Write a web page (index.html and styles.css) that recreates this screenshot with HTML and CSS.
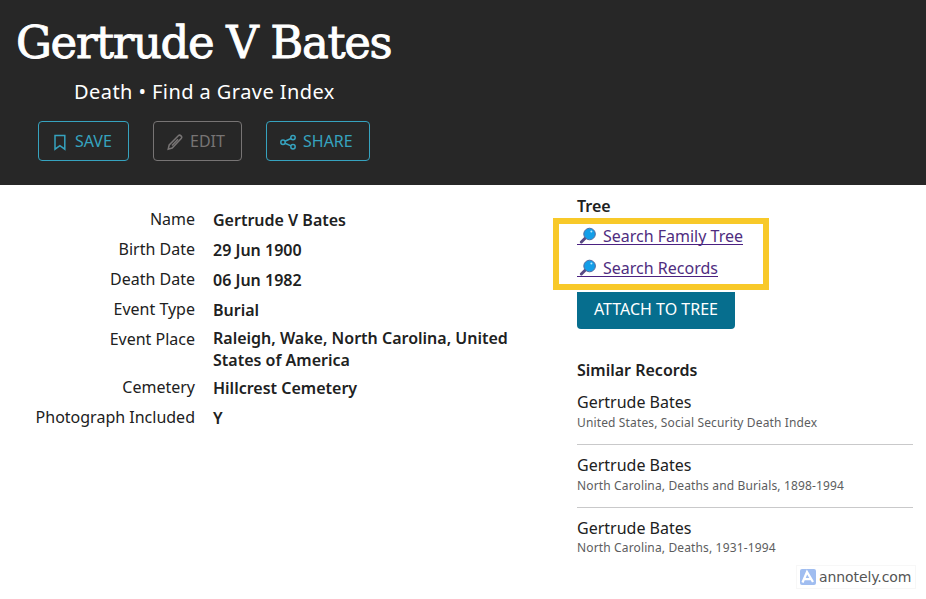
FILE: index.html
```html
<!DOCTYPE html>
<html lang="en">
<head>
<meta charset="utf-8">
<title>Gertrude V Bates</title>
<link rel="stylesheet" href="styles.css">
</head>
<body>
<header class="hero">
  <h1 class="title">Gertrude V Bates</h1>
  <p class="subtitle">Death • Find a Grave Index</p>
  <div class="actions">
    <button class="btn save"><svg width="16" height="18" viewBox="0 0 16 18"><path d="M3 2.5h9.8V16.2L7.9 12.6 3 16.2Z"/></svg><span>SAVE</span></button>
    <button class="btn edit"><svg width="16" height="18" viewBox="0 0 16 18"><path d="M1.2 16.2 2.2 12 11.3 2.7Q12.6 1.5 14 2.9 15.4 4.3 14.2 5.6L5.2 15ZM5 12.4l6-6.2"/></svg><span>EDIT</span></button>
    <button class="btn share"><svg width="16" height="18" viewBox="0 0 16 18"><circle cx="3" cy="9.2" r="2.2"/><circle cx="13" cy="4.6" r="2.2"/><circle cx="13" cy="13.8" r="2.2"/><path d="m5 8.2 6-2.7M5 10.2l6 2.7"/></svg><span>SHARE</span></button>
  </div>
</header>
<main class="content">
  <dl class="facts">
    <dt>Name</dt><dd>Gertrude V Bates</dd>
    <dt>Birth Date</dt><dd>29 Jun 1900</dd>
    <dt>Death Date</dt><dd>06 Jun 1982</dd>
    <dt>Event Type</dt><dd>Burial</dd>
    <dt>Event Place</dt><dd class="place">Raleigh, Wake, North Carolina, United<br>States of America</dd>
    <dt>Cemetery</dt><dd>Hillcrest Cemetery</dd>
    <dt>Photograph Included</dt><dd>Y</dd>
  </dl>
  <aside class="side">
    <h2 class="heading">Tree</h2>
    <div class="highlight">
      <a class="link family"><svg width="20" height="18" viewBox="0 0 20 18"><path class="handle" d="m4.4 16 4-4"/><circle class="lens" cx="12.6" cy="8" r="5.8"/><circle class="glint" cx="14.4" cy="5.4" r="1"/></svg><span>Search Family Tree</span></a>
      <a class="link records"><svg width="20" height="18" viewBox="0 0 20 18"><path class="handle" d="m4.4 16 4-4"/><circle class="lens" cx="12.6" cy="8" r="5.8"/><circle class="glint" cx="14.4" cy="5.4" r="1"/></svg><span>Search Records</span></a>
    </div>
    <button class="attach"><span>ATTACH TO TREE</span></button>
    <h2 class="heading similar">Similar Records</h2>
    <ul class="list">
      <li><b>Gertrude Bates</b><small>United States, Social Security Death Index</small></li>
      <li><b>Gertrude Bates</b><small>North Carolina, Deaths and Burials, 1898-1994</small></li>
      <li><b>Gertrude Bates</b><small>North Carolina, Deaths, 1931-1994</small></li>
    </ul>
  </aside>
</main>
<div class="watermark"><svg width="16" height="16" viewBox="0 0 16 16"><rect width="16" height="16" rx="2" fill="#a0bdf0"/><path d="M2.5 13.5 7 3l6 10M4.5 9.8l6 .3" fill="none" stroke="#fff" stroke-width="2.3"/></svg><span>annotely.com</span></div>
</body>
</html>
```
FILE: styles.css
```css
* { box-sizing: border-box; }
body {
  margin: 0;
  width: 926px;
  height: 599px;
  overflow: hidden;
  position: relative;
  background: #fff;
  color: #202121;
  font: 16px/22px "Noto Sans", sans-serif;
  white-space: nowrap;
}
h1, h2, p, dl, dd, ul { margin: 0; padding: 0; }
.hero { height: 185px; background: #272727; color: #fff; }
.title {
  padding: 13px 0 0 16px;
  font: 400 45px/60px "DejaVu Serif", serif;
  letter-spacing: -1.35px;
  -webkit-text-stroke: 0.9px #fff;
}
.subtitle { padding: 5px 0 0 74px; font-size: 20px; line-height: 28px; letter-spacing: 0.43px; }
.actions { display: flex; gap: 24px; padding: 15px 0 0 38px; }
.btn {
  display: flex;
  align-items: center;
  gap: 7px;
  height: 40px;
  padding: 0 0 0 13px;
  border: 1px solid #36a3bf;
  border-radius: 4px;
  background: none;
  color: #36a3bf;
  font: 16px/22px "Noto Sans", sans-serif;
}
.btn svg { flex: none; margin-top: 2px; fill: none; stroke: currentColor; stroke-width: 1.5; }
.save { width: 91px; }
.edit { width: 89px; color: #777474; border-color: #777474; }
.share { width: 104px; }
.content { display: grid; grid-template-columns: 577px 336px; }
.facts {
  display: grid;
  grid-template-columns: 195px 364px;
  column-gap: 18px;
  align-content: start;
  grid-auto-rows: minmax(30px, auto);
  padding-top: 20px;
}
.facts dt { padding-top: 3px; text-align: right; }
.facts dd { padding-top: 4px; font-weight: 600; }
.facts .place { padding: 2px 0; }
.heading { font-size: 16px; line-height: 22px; font-weight: 600; }
.side { padding-top: 10px; }
.highlight {
  width: 216px;
  height: 72px;
  margin: 1px 0 0 -24px;
  padding: 2px 0 0 18px;
  border: 6px solid #f8c929;
}
.link {
  display: flex;
  gap: 6px;
  width: 166px;
  height: 19px;
  margin-bottom: 13px;
  border-bottom: 1px solid #4b2181;
  color: #4f2d80;
}
.link span { line-height: 20px; }
.records { width: 141px; }
.handle { stroke: #584a83; stroke-width: 3; stroke-linecap: round; }
.lens { fill: #139ee8; stroke: #506aa0; stroke-width: 1; }
.glint { fill: #b2e7ff; }
.attach {
  display: block;
  width: 158px;
  height: 37px;
  margin-top: 2px;
  padding: 0 0 4px;
  border: 0;
  border-radius: 0 0 4px 4px;
  background: #066e8e;
  color: #fff;
  font: 16px/32px "Noto Sans", sans-serif;
}
.similar { margin-top: 30px; }
.list { list-style: none; }
.list li { height: 63px; padding-top: 9px; border-bottom: 1px solid #c9c9ca; }
.list li:first-child { height: 64px; padding-top: 10px; }
.list li:last-child { border: 0; }
.list b { display: block; font-weight: 400; line-height: 22px; }
.list small { display: block; padding-top: 1px; font-size: 12px; line-height: 18px; letter-spacing: 0.14px; color: #5c5d5e; }
.list li:last-child small { padding-top: 0; }
.watermark {
  position: absolute;
  left: 796px;
  top: 565px;
  display: flex;
  align-items: center;
  gap: 3px;
  width: 120px;
  height: 24px;
  padding-left: 3px;
  border: 1px solid #f7f7f7;
  color: #555;
  font: 14px/18px "DejaVu Sans", sans-serif;
  letter-spacing: -0.1px;
}
```
